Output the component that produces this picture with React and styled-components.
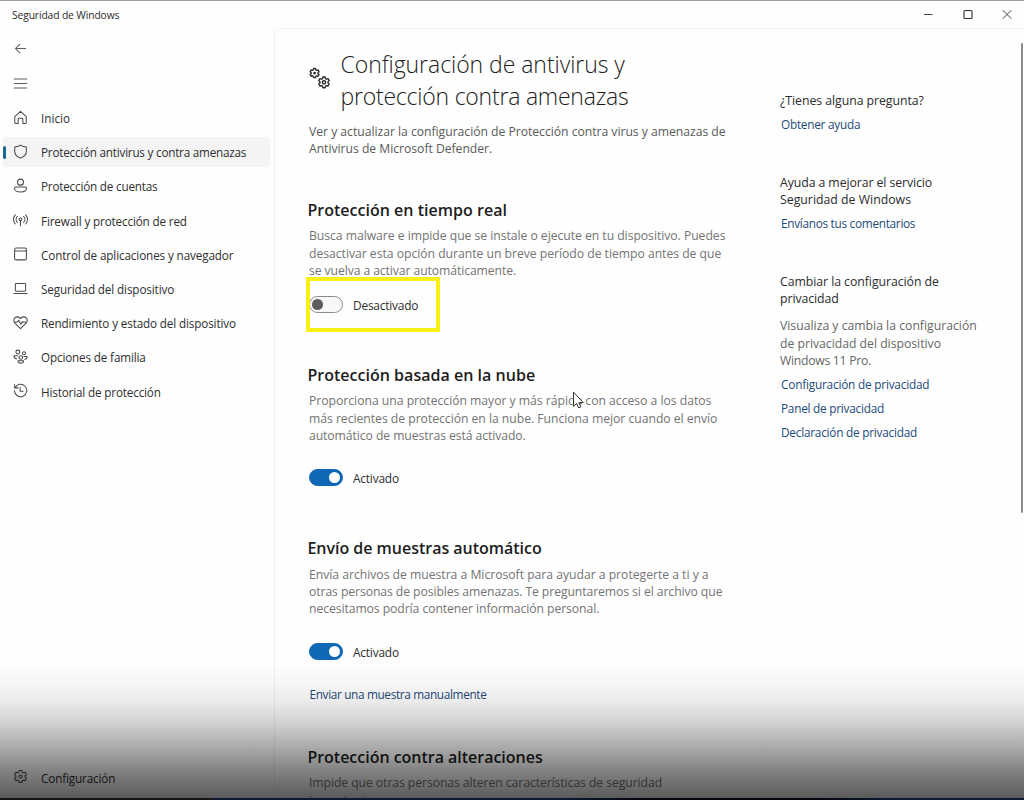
import React from 'react';
import styled, { createGlobalStyle, css } from 'styled-components';

const GlobalStyle = createGlobalStyle`
  * { box-sizing: border-box; }
  html, body { margin: 0; padding: 0; }
  body { background: #fefefe; overflow: hidden; font-family: "Open Sans", "Noto Sans", sans-serif; }
  h1, h2, h3, p, ul { margin: 0; padding: 0; font-weight: 400; }
`;

const Window = styled.div`
  position: relative;
  display: flex;
  flex-direction: column;
  width: 1024px;
  height: 800px;
  overflow: hidden;
  background: #fefefe;
  border-top: 1px solid #9b9b9b;
`;

const TitleBar = styled.header`
  flex: none;
  display: flex;
  align-items: center;
  justify-content: space-between;
  height: 27px;
  padding: 1px 10px 0 12px;
  font-size: 10.3px;
  letter-spacing: -0.12px;
  color: #2c2c2c;
`;

const WindowControls = styled.div`
  display: flex;
  gap: 25.3px;
  svg { display: block; }
`;

const Body = styled.div`
  flex: 1;
  min-height: 0;
  display: flex;
`;

const Sidebar = styled.nav`
  flex: none;
  display: flex;
  flex-direction: column;
  width: 274px;
  padding: 3.5px 4px 7px 3px;
`;

const IconButton = styled.button`
  display: flex;
  align-items: center;
  height: 34.4px;
  padding: 0 0 0 10px;
  border: 0;
  background: none;
  color: #5c5c5c;
`;

const NavList = styled.div`
  display: flex;
  flex-direction: column;
  gap: 3.7px;
  padding-top: 2.5px;
`;

const NavItem = styled.a`
  position: relative;
  display: flex;
  align-items: center;
  gap: 13px;
  height: 30.5px;
  padding-left: 10px;
  border-radius: 4px;
  font-size: 11.7px;
  letter-spacing: ${(p) => p.$track}px;
  white-space: nowrap;
  color: #2f2f2f;
  ${(p) =>
    p.$active &&
    css`
      background: #f4f4f4;
      &::before {
        content: '';
        position: absolute;
        left: 0;
        top: 9px;
        width: 3px;
        height: 13px;
        border-radius: 2px;
        background: #1b6796;
      }
    `}
  svg { flex: none; margin-top: -2px; color: #4a4a4a; }
`;

const SidebarFooter = styled.div`
  margin-top: auto;
`;

const Content = styled.main`
  flex: 1;
  min-width: 0;
  display: flex;
  align-items: flex-start;
  overflow: hidden;
  padding-left: 33px;
  border-left: 1px solid #f0f0f0;
  border-top: 1px solid #f3f3f3;
  border-top-left-radius: 6px;
`;

const MainColumn = styled.div`
  flex: none;
  width: 472px;
  padding-top: 19px;
`;

const PageHeader = styled.div`
  display: flex;
  gap: 9.5px;
  height: 64px;
  svg { flex: none; margin: 19px 0 0 1px; }
`;

const PageTitle = styled.h1`
  font-size: 23px;
  font-weight: 300;
  line-height: 32px;
  color: #1c1c1c;
`;

const Line = styled.span`
  display: block;
  white-space: nowrap;
  letter-spacing: ${(p) => p.$track || 0}px;
`;

const Paragraph = styled.p`
  padding-left: 1px;
  font-size: 12.2px;
  line-height: 17.1px;
  color: ${(p) => (p.$strong ? '#5a5a5a' : '#747474')};
`;

const Intro = styled(Paragraph)`
  margin: 10.5px 0 42.3px;
`;

const Section = styled.section`
  height: ${(p) => p.$height}px;
`;

const SectionTitle = styled.h2`
  height: 28.5px;
  margin-left: -0.6px;
  font-size: 16px;
  font-weight: 600;
  line-height: 22px;
  color: #1d1d1d;
`;

const ToggleRow = styled.div`
  position: relative;
  display: flex;
  align-items: center;
  gap: 10px;
  height: 20px;
  margin-top: ${(p) => p.$gap}px;
  padding-left: 1px;
  font-size: 11.9px;
  letter-spacing: -0.2px;
  color: #2f2f2f;
`;

const Track = styled.span`
  display: flex;
  align-items: center;
  justify-content: ${(p) => (p.$on ? 'flex-end' : 'flex-start')};
  width: 34px;
  height: 17px;
  padding: 0 3px;
  border-radius: 9px;
  border: 1px solid ${(p) => (p.$on ? '#1067b5' : '#8c8c8c')};
  background: ${(p) => (p.$on ? '#1067b5' : '#f8f8f8')};
`;

const Knob = styled.span`
  width: ${(p) => (p.$on ? 11 : 10.5)}px;
  height: ${(p) => (p.$on ? 11 : 10.5)}px;
  margin: 0 ${(p) => (p.$on ? '-1px' : '0')} 0 ${(p) => (p.$on ? '0' : '-1px')};
  border-radius: 50%;
  background: ${(p) => (p.$on ? '#fff' : '#5c5c5c')};
`;

const ToggleLabel = styled.span`
  padding-top: 1px;
`;

const Highlight = styled.span`
  position: absolute;
  left: -1.6px;
  top: -17px;
  width: 134px;
  height: 55px;
  border: 4px solid #f8ef16;
`;

const Link = styled.a`
  display: block;
  height: 24px;
  padding-left: 1px;
  font-size: 11.8px;
  line-height: 24px;
  letter-spacing: ${(p) => p.$track}px;
  white-space: nowrap;
  color: #1d4a79;
`;

const ManualLink = styled(Link)`
  margin-top: 21px;
  padding-left: 1.5px;
`;

const Aside = styled.aside`
  flex: 1;
  padding-top: 63.4px;
`;

const AsideBlock = styled.section`
  margin-bottom: ${(p) => p.$after}px;
`;

const AsideTitle = styled.h3`
  margin-bottom: 2.8px;
  font-size: 12.3px;
  line-height: 17.1px;
  color: #2c2c2c;
`;

const AsideText = styled(Paragraph)`
  margin: 10px 0 3px;
  padding-left: 0;
  color: #666;
`;

const ScrollThumb = styled.div`
  position: absolute;
  right: 1px;
  top: 42px;
  width: 2px;
  height: 470px;
  border-radius: 1px;
  background: #8b8b8b;
`;

const Pointer = styled.svg`
  position: absolute;
  left: 572px;
  top: 390px;
`;

const BottomShade = styled.div`
  position: absolute;
  left: 0;
  right: 0;
  bottom: 0;
  height: 160px;
  pointer-events: none;
  background: linear-gradient(
    to bottom,
    rgba(0, 0, 0, 0) 0%,
    rgba(0, 0, 0, 0.005) 15%,
    rgba(0, 0, 0, 0.03) 27%,
    rgba(0, 0, 0, 0.075) 38%,
    rgba(0, 0, 0, 0.17) 51%,
    rgba(0, 0, 0, 0.33) 67%,
    rgba(0, 0, 0, 0.5) 83%,
    rgba(0, 0, 0, 0.6) 94%,
    rgba(0, 0, 0, 0.65) 100%
  );
`;

const DesktopEdge = styled.div`
  position: absolute;
  left: 0;
  right: 0;
  bottom: 0;
  height: 2px;
  background: linear-gradient(to right, #161516 0 212px, #0c1a33 214px 560px, #05070f 640px 820px, #0e1b38 900px);
`;

function Icon({ size = 15, children, width = 1.1 }) {
  return (
    <svg width={size} height={size} viewBox="0 0 16 16" fill="none" stroke="currentColor" strokeWidth={width} strokeLinecap="round" strokeLinejoin="round">
      {children}
    </svg>
  );
}

const GEAR =
  'M6.6 1.5h2.8l.4 1.9 1.3.75 1.85-.6 1.4 2.4-1.45 1.3v1.5l1.45 1.3-1.4 2.4-1.85-.6-1.3.75-.4 1.9H6.6l-.4-1.9-1.3-.75-1.85.6-1.4-2.4 1.45-1.3v-1.5l-1.45-1.3 1.4-2.4 1.85.6 1.3-.75z';

const icons = {
  back: <path d="M13.5 8H2.8M7.3 3.3 2.6 8l4.7 4.7" />,
  menu: <path d="M1.3 3.2h13.4M1.3 8h13.4M1.3 12.8h13.4" />,
  home: <path d="M1.9 7.1 8 1.5l6.1 5.6v6.2c0 .7-.4 1.1-1 1.1h-2.6V9.7c0-.5-.3-.8-.8-.8H6.3c-.5 0-.8.3-.8.8v4.7H2.9c-.6 0-1-.4-1-1.1z" />,
  shield: <path d="M8 1.2c1.8 1.4 3.8 2 6.2 2.1v4.3c0 3.6-2.2 5.9-6.2 7.3-4-1.4-6.2-3.7-6.2-7.3V3.3C4.2 3.2 6.2 2.6 8 1.2z" />,
  account: (
    <>
      <circle cx="8" cy="4.4" r="3.2" />
      <path d="M3 9.7h10c.8 0 1.4.6 1.4 1.3 0 2.6-2.9 4-6.4 4s-6.4-1.4-6.4-4c0-.7.6-1.3 1.4-1.3z" />
    </>
  ),
  antenna: (
    <>
      <circle cx="8" cy="7.8" r="1.5" />
      <path d="M8 9.4v5.2M4.700 11.200a4.800 4.800 0 0 1 0-6.600M11.300 11.200a4.800 4.800 0 0 0 0-6.600M2.400 12.700a7.300 7.300 0 0 1 0-9.700M13.600 12.700a7.300 7.300 0 0 0 0-9.700" />
    </>
  ),
  app: (
    <>
      <rect x="1.7" y="2.2" width="12.6" height="12.6" rx="1.6" />
      <path d="M1.7 5.4h12.6" />
    </>
  ),
  laptop: (
    <>
      <rect x="2.5" y="3.8" width="11" height="8.2" rx="1" />
      <path d="M1 14.3h14" />
    </>
  ),
  heart: (
    <>
      <path d="M8 14.5 2 8.600C.4 6.900.5 4.400 2 3c1.600-1.500 4.200-1.400 6 .8 1.800-2.200 4.400-2.300 6-.8 1.500 1.400 1.600 3.900 0 5.600z" />
      <path d="M2 7.500h2.700l1.500-2 2.100 4.400 1.900-3 .9.900H14" />
    </>
  ),
  family: (
    <>
      <circle cx="5.200" cy="3.300" r="2.100" />
      <circle cx="11.700" cy="4.600" r="1.600" />
      <circle cx="8.300" cy="9" r="1.900" />
      <path d="M5.300 12.600h6c0 1.700-1.200 2.700-3 2.700s-3-1-3-2.700zM4.700 7.300H1.100c0 2 .9 3.100 2.800 3.400M11.600 8.100h3.500c0 1.700-.9 2.700-2.500 3" />
    </>
  ),
  history: (
    <>
      <path d="M1.700 1.500v3.700h3.700M2.200 5A6.600 6.600 0 1 1 1.500 8.400" />
      <path d="M7.600 4.800v4h3.200" />
    </>
  ),
  gear: (
    <>
      <path d={GEAR} />
      <circle cx="8" cy="8" r="1.700" />
    </>
  ),
};

const NAV = [
  ['home', 'Inicio', 0.02],
  ['shield', 'Protección antivirus y contra amenazas', -0.215],
  ['account', 'Protección de cuentas', -0.19],
  ['antenna', 'Firewall y protección de red', -0.15],
  ['app', 'Control de aplicaciones y navegador', -0.12],
  ['laptop', 'Seguridad del dispositivo', -0.12],
  ['heart', 'Rendimiento y estado del dispositivo', -0.135],
  ['family', 'Opciones de familia', -0.15],
  ['history', 'Historial de protección', -0.155],
];

const SECTIONS = [
  {
    height: 165, gap: 15.5, on: false, marked: true,
    title: ['Protección en tiempo real', 0.02],
    lines: [
      ['Busca malware e impide que se instale o ejecute en tu dispositivo. Puedes', -0.04],
      ['desactivar esta opción durante un breve período de tiempo antes de que', -0.025],
      ['se vuelva a activar automáticamente.', -0.09],
    ],
  },
  {
    height: 173.5, gap: 24, on: true,
    title: ['Protección basada en la nube', 0.02],
    lines: [
      ['Proporciona una protección mayor y más rápida con acceso a los datos', -0.02],
      ['más recientes de protección en la nube. Funciona mejor cuando el envío', -0.03],
      ['automático de muestras está activado.', -0.075],
    ],
  },
  {
    height: 208.5, gap: 24, on: true,
    title: ['Envío de muestras automático', -0.02],
    lines: [
      ['Envía archivos de muestra a Microsoft para ayudar a protegerte a ti y a', -0.02],
      ['otras personas de posibles amenazas. Te preguntaremos si el archivo que', -0.08],
      ['necesitamos podría contener información personal.', -0.075],
    ],
    link: ['Enviar una muestra manualmente', -0.345],
  },
];

function Lines({ items }) {
  return items.map(([text, track]) => (
    <Line key={text} $track={track}>{text}</Line>
  ));
}

function Toggle({ on, marked, gap }) {
  return (
    <ToggleRow $gap={gap}>
      <Track $on={on}><Knob $on={on} /></Track>
      <ToggleLabel>{on ? 'Activado' : 'Desactivado'}</ToggleLabel>
      {marked && <Highlight />}
    </ToggleRow>
  );
}

export default function App() {
  return (
    <Window>
      <GlobalStyle />
      <TitleBar>
        <span>Seguridad de Windows</span>
        <WindowControls>
          <svg width="14" height="14" viewBox="0 0 14 14" stroke="#444" fill="none"><path d="M3 6.500h8.500" /></svg>
          <svg width="14" height="14" viewBox="0 0 14 14" stroke="#2c2c2c" strokeWidth="1.100" fill="none"><rect x="3" y="2.500" width="8" height="8" rx="1" /></svg>
          <svg width="14" height="14" viewBox="0 0 14 14" stroke="#444" fill="none"><path d="m2.800 2.200 8.600 8.600M11.400 2.200l-8.600 8.600" /></svg>
        </WindowControls>
      </TitleBar>
      <Body>
        <Sidebar>
          <IconButton aria-label="Atrás"><Icon>{icons.back}</Icon></IconButton>
          <IconButton aria-label="Menú"><Icon>{icons.menu}</Icon></IconButton>
          <NavList>
            {NAV.map(([icon, label, track], i) => (
              <NavItem key={label} $active={i === 1} $track={track}>
                <Icon>{icons[icon]}</Icon>
                {label}
              </NavItem>
            ))}
          </NavList>
          <SidebarFooter>
            <NavItem $track={-0.13}><Icon>{icons.gear}</Icon>Configuración</NavItem>
          </SidebarFooter>
        </Sidebar>
        <Content>
          <MainColumn>
            <PageHeader>
              <svg width="22" height="24" viewBox="0 0 22 24" fill="none" stroke="#2c2c2c" strokeLinejoin="round">
                <g transform="translate(0 .5) scale(.7)" strokeWidth="2"><path d={GEAR} /><circle cx="8" cy="8" r="1" /></g>
                <g transform="translate(8.4 8.8) scale(.82)" strokeWidth="1.7"><path d={GEAR} /><circle cx="8" cy="8" r="2" /></g>
              </svg>
              <PageTitle>
                <Lines items={[['Configuración de antivirus y', -0.05], ['protección contra amenazas', -0.22]]} />
              </PageTitle>
            </PageHeader>
            <Intro $strong>
              <Lines items={[['Ver y actualizar la configuración de Protección contra virus y amenazas de', -0.03], ['Antivirus de Microsoft Defender.', -0.03]]} />
            </Intro>
            {SECTIONS.map((s) => (
              <Section key={s.title[0]} $height={s.height}>
                <SectionTitle><Line $track={s.title[1]}>{s.title[0]}</Line></SectionTitle>
                <Paragraph><Lines items={s.lines} /></Paragraph>
                <Toggle on={s.on} marked={s.marked} gap={s.gap} />
                {s.link && <ManualLink $track={s.link[1]}>{s.link[0]}</ManualLink>}
              </Section>
            ))}
            <Section $height={80}>
              <SectionTitle><Line $track={-0.02}>Protección contra alteraciones</Line></SectionTitle>
              <Paragraph>
                <Lines items={[['Impide que otras personas alteren características de seguridad', -0.07], ['importantes.', -0.03]]} />
              </Paragraph>
            </Section>
          </MainColumn>
          <Aside>
            <AsideBlock $after={38}>
              <AsideTitle><Line $track={-0.05}>¿Tienes alguna pregunta?</Line></AsideTitle>
              <Link $track={-0.25}>Obtener ayuda</Link>
            </AsideBlock>
            <AsideBlock $after={38}>
              <AsideTitle><Lines items={[['Ayuda a mejorar el servicio', -0.09], ['Seguridad de Windows', 0]]} /></AsideTitle>
              <Link $track={-0.29}>Envíanos tus comentarios</Link>
            </AsideBlock>
            <AsideBlock $after={0}>
              <AsideTitle><Lines items={[['Cambiar la configuración de', -0.06], ['privacidad', -0.08]]} /></AsideTitle>
              <AsideText>
                <Lines items={[['Visualiza y cambia la configuración', 0.015], ['de privacidad del dispositivo', 0], ['Windows 11 Pro.', -0.27]]} />
              </AsideText>
              <Link $track={-0.2}>Configuración de privacidad</Link>
              <Link $track={-0.24}>Panel de privacidad</Link>
              <Link $track={-0.23}>Declaración de privacidad</Link>
            </AsideBlock>
          </Aside>
        </Content>
      </Body>
      <ScrollThumb />
      <Pointer width="13" height="19" viewBox="0 0 13 19">
        <path d="M1.500 1.200v14.200l3.200-3 2 4.500 2.200-1-2-4.300h4.400z" fill="#fff" stroke="#333" strokeWidth="1" />
      </Pointer>
      <BottomShade />
      <DesktopEdge />
    </Window>
  );
}
